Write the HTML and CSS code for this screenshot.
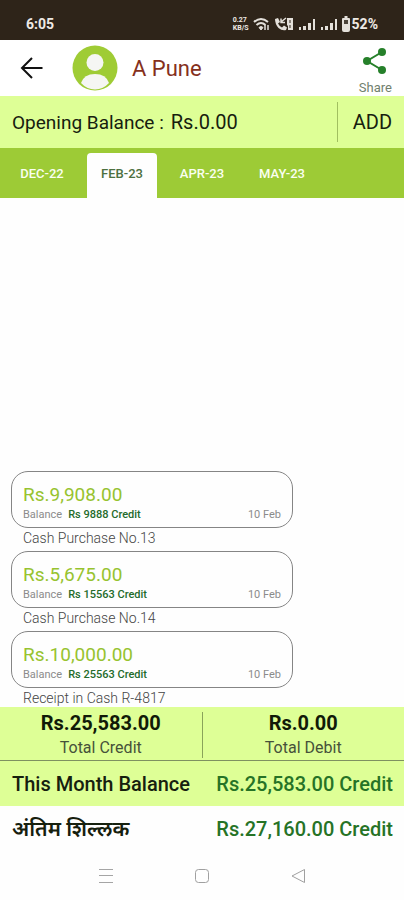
FILE: index.html
```
<!DOCTYPE html>
<html lang="en">
<head>
<meta charset="utf-8">
<meta name="viewport" content="width=device-width, initial-scale=1">
<title>A Pune</title>
<link rel="stylesheet" href="styles.css">
</head>
<body>
<div class="status">
  <span class="clock">6:05</span>
  <div class="status-icons">
    <span class="speed"><span>0.27</span><span>KB/S</span></span>
    <svg width="17" height="14" viewBox="0 0 17 14" fill="none" stroke="#e4e0da" stroke-width="2"><path d="M1 5Q8 -1 15 5M3.500 8Q8 4 12.500 8"/><path d="M6 10.500Q8 8.500 10 10.500L8 13Z" fill="#e4e0da" stroke-width="1"/><path d="M12 8v5M15 8v5" stroke-width="1.500"/></svg>
    <svg width="20" height="14" viewBox="0 0 20 14" fill="#e4e0da"><path d="M1 2l3-1 2 4-2 1.500q1.500 3 4 4l2-2 3 2-1 2.500q-4 1-7.500-2Q1 7 1 2z"/><path d="M7 5l5-4M7 1.500V5.500h4" stroke="#e4e0da" stroke-width="1.500" fill="none"/><path d="M13 1h6v12h-5V9l-1-1z"/><path d="M16 3v3M16 8v3" stroke="#2e2419" stroke-width="1"/></svg>
    <svg width="18" height="14" viewBox="0 0 18 14" fill="#e4e0da"><path d="M1 10h2v3H1zM5 9h3v4H5zM10 6h3v7h-3zM15 2h2v11h-2z"/></svg>
    <svg width="18" height="14" viewBox="0 0 18 14" fill="#e4e0da"><path d="M1 10h2v3H1zM5 9h3v4H5zM10 6h3v7h-3zM15 2h2v11h-2z"/></svg>
    <svg width="8" height="16" viewBox="0 0 8 16"><path d="M2.500 0h3v2H7q1 0 1 1v11q0 2-2 2H2q-2 0-2-2V3q0-1 1-1h1.500z" fill="#e4e0da"/><path d="M2 4h4v4H2z" fill="#4b4339"/></svg>
    <span class="percent">52%</span>
  </div>
</div>
<header class="header">
  <button class="icon-button" aria-label="Back"><svg width="24" height="24" viewBox="0 0 24 24" fill="none" stroke="#111" stroke-width="2"><path d="M22.500 12H2.500M12 2L2 12l10 10"/></svg></button>
  <svg class="avatar" width="46" height="46" viewBox="0 0 46 46"><circle cx="23" cy="23" r="22.500" fill="#9fcc35"/><circle cx="23" cy="17.500" r="8.500" fill="#f5f6f3"/><path d="M9 38Q12 29 23 29T37 38Q31 44.500 23 44.500T9 38z" fill="#f5f6f3"/></svg>
  <h1 class="name">A Pune</h1>
  <button class="share"><svg width="26" height="28" viewBox="0 0 26 28"><path d="M20 5L5 14l15 9" fill="none" stroke="#26802a" stroke-width="2"/><g fill="#26802a"><circle cx="20" cy="5" r="4"/><circle cx="5" cy="14" r="4"/><circle cx="20" cy="23" r="4"/></g></svg><span>Share</span></button>
</header>
<section class="opening">
  <p class="opening-text"><span class="opening-label">Opening Balance :</span><span>Rs.0.00</span></p>
  <button class="add">ADD</button>
</section>
<nav class="tabs">
  <a class="tab" href="#dec">DEC-22</a>
  <a class="tab active" href="#feb" aria-current="page">FEB-23</a>
  <a class="tab" href="#apr">APR-23</a>
  <a class="tab" href="#may">MAY-23</a>
</nav>
<main class="entries">
  <article class="entry">
    <div class="card"><p class="amount">Rs.9,908.00</p><p class="detail"><span>Balance</span><b>Rs 9888 Credit</b><time>10 Feb</time></p></div>
    <p class="note">Cash Purchase No.13</p>
  </article>
  <article class="entry">
    <div class="card"><p class="amount">Rs.5,675.00</p><p class="detail"><span>Balance</span><b>Rs 15563 Credit</b><time>10 Feb</time></p></div>
    <p class="note">Cash Purchase No.14</p>
  </article>
  <article class="entry">
    <div class="card"><p class="amount">Rs.10,000.00</p><p class="detail"><span>Balance</span><b>Rs 25563 Credit</b><time>10 Feb</time></p></div>
    <p class="note">Receipt in Cash R-4817</p>
  </article>
</main>
<section class="totals">
  <div class="total"><strong>Rs.25,583.00</strong><span>Total Credit</span></div>
  <div class="total"><strong>Rs.0.00</strong><span>Total Debit</span></div>
</section>
<section class="balance month"><span>This Month Balance</span><span class="credit">Rs.25,583.00 Credit</span></section>
<section class="balance"><span class="marathi" lang="mr">अंतिम शिल्लक</span><span class="credit">Rs.27,160.00 Credit</span></section>
<footer class="system">
  <button class="icon-button" aria-label="Recent apps"><svg width="16" height="16" viewBox="0 0 16 16" stroke="#a5a5a5"><path d="M1 1.500h14M1 7.500h14M1 14.500h14"/></svg></button>
  <button class="icon-button" aria-label="Home"><svg width="16" height="16" viewBox="0 0 16 16" fill="none" stroke="#a0a0a0"><rect x="1.500" y="1.500" width="13" height="13" rx="3"/></svg></button>
  <button class="icon-button" aria-label="Go back"><svg width="16" height="16" viewBox="0 0 16 16" fill="none" stroke="#a0a0a0" stroke-linejoin="round"><path d="M14.500 1.500v13L2 8z"/></svg></button>
</footer>
</body>
</html>
```
FILE: styles.css
```
* { box-sizing: border-box; }
body {
  margin: 0;
  min-height: 100vh;
  display: flex;
  flex-direction: column;
  background: #fefefe;
  color: #16200e;
  font-family: Roboto, "Noto Sans", "Liberation Sans", sans-serif;
}
p, h1 { margin: 0; }
button { border: 0; padding: 0; background: none; color: inherit; font: inherit; cursor: pointer; }
.icon-button { display: flex; }

.status {
  height: 40px;
  padding: 8px 26px 0;
  display: flex;
  align-items: center;
  justify-content: space-between;
  background: #2e2419;
  color: #eeeae5;
  font-size: 14px;
  font-weight: 700;
}
.status-icons { display: flex; align-items: center; gap: 4px; }
.speed { display: flex; flex-direction: column; font-size: 7px; line-height: 8px; }
.percent { margin-left: -2px; }

.header { height: 56px; padding: 0 12px 0 20px; display: flex; align-items: center; background: #fff; }
.avatar { margin-left: 28px; }
.name { flex: 1; margin-left: 14px; color: #85301c; font-size: 22px; font-weight: 400; }
.share { padding-top: 6px; display: flex; flex-direction: column; align-items: center; gap: 6px; color: #71806e; font-size: 13px; line-height: 14px; }

.opening { height: 52px; padding: 6px 12px; display: flex; align-items: stretch; background: #deff96; font-size: 20px; }
.opening-text { flex: 1; display: flex; align-items: center; gap: 7px; }
.opening-label { font-size: 19px; }
.add { padding-left: 15px; border-left: 1px solid #a1bf60; }

.tabs { height: 50px; padding: 5px 0 0 7px; display: flex; gap: 10px; background: #9dcb36; }
.tab {
  width: 70px;
  display: flex;
  align-items: center;
  justify-content: center;
  padding-bottom: 4px;
  border-radius: 4px 4px 0 0;
  color: #fafff0;
  font-size: 13px;
  font-weight: 500;
  text-decoration: none;
}
.active { background: #fefefe; color: #4d7040; }

.entries { flex: 1; padding: 0 11px; display: flex; flex-direction: column; justify-content: flex-end; gap: 4px; }
.entry { width: 100%; max-width: 282px; }
.card { height: 57px; padding: 12px 11px 0; border: 1px solid #858585; border-radius: 17px; }
.amount { color: #97c32f; font-size: 19px; line-height: 22px; }
.detail { display: flex; gap: 6px; color: #8b8b8b; font-size: 11px; line-height: 18px; }
.detail b { color: #246b2b; font-weight: 500; }
.detail time { margin-left: auto; }
.note { padding: 1px 12px 0; color: #444; font-size: 14px; font-weight: 300; line-height: 18px; }

.totals { padding: 5px 0 2px; display: flex; background: #deff96; border-bottom: 1px solid #7e9160; }
.total { flex: 1; display: flex; flex-direction: column; align-items: center; gap: 4px; font-size: 16px; line-height: 20px; color: #46513a; }
.total + .total { border-left: 1px solid #89a35a; }
.total strong { color: #111a08; font-size: 20px; line-height: 22px; font-weight: 700; }
.balance { height: 45px; padding: 0 11px 0 12px; display: flex; align-items: center; justify-content: space-between; font-size: 20px; font-weight: 500; }
.month { background: #deff96; }
.credit { color: #267326; }
.marathi { font-size: 21px; line-height: 24px; font-weight: 600; }
.system { height: 49px; display: flex; align-items: center; justify-content: center; gap: 80px; }
```
